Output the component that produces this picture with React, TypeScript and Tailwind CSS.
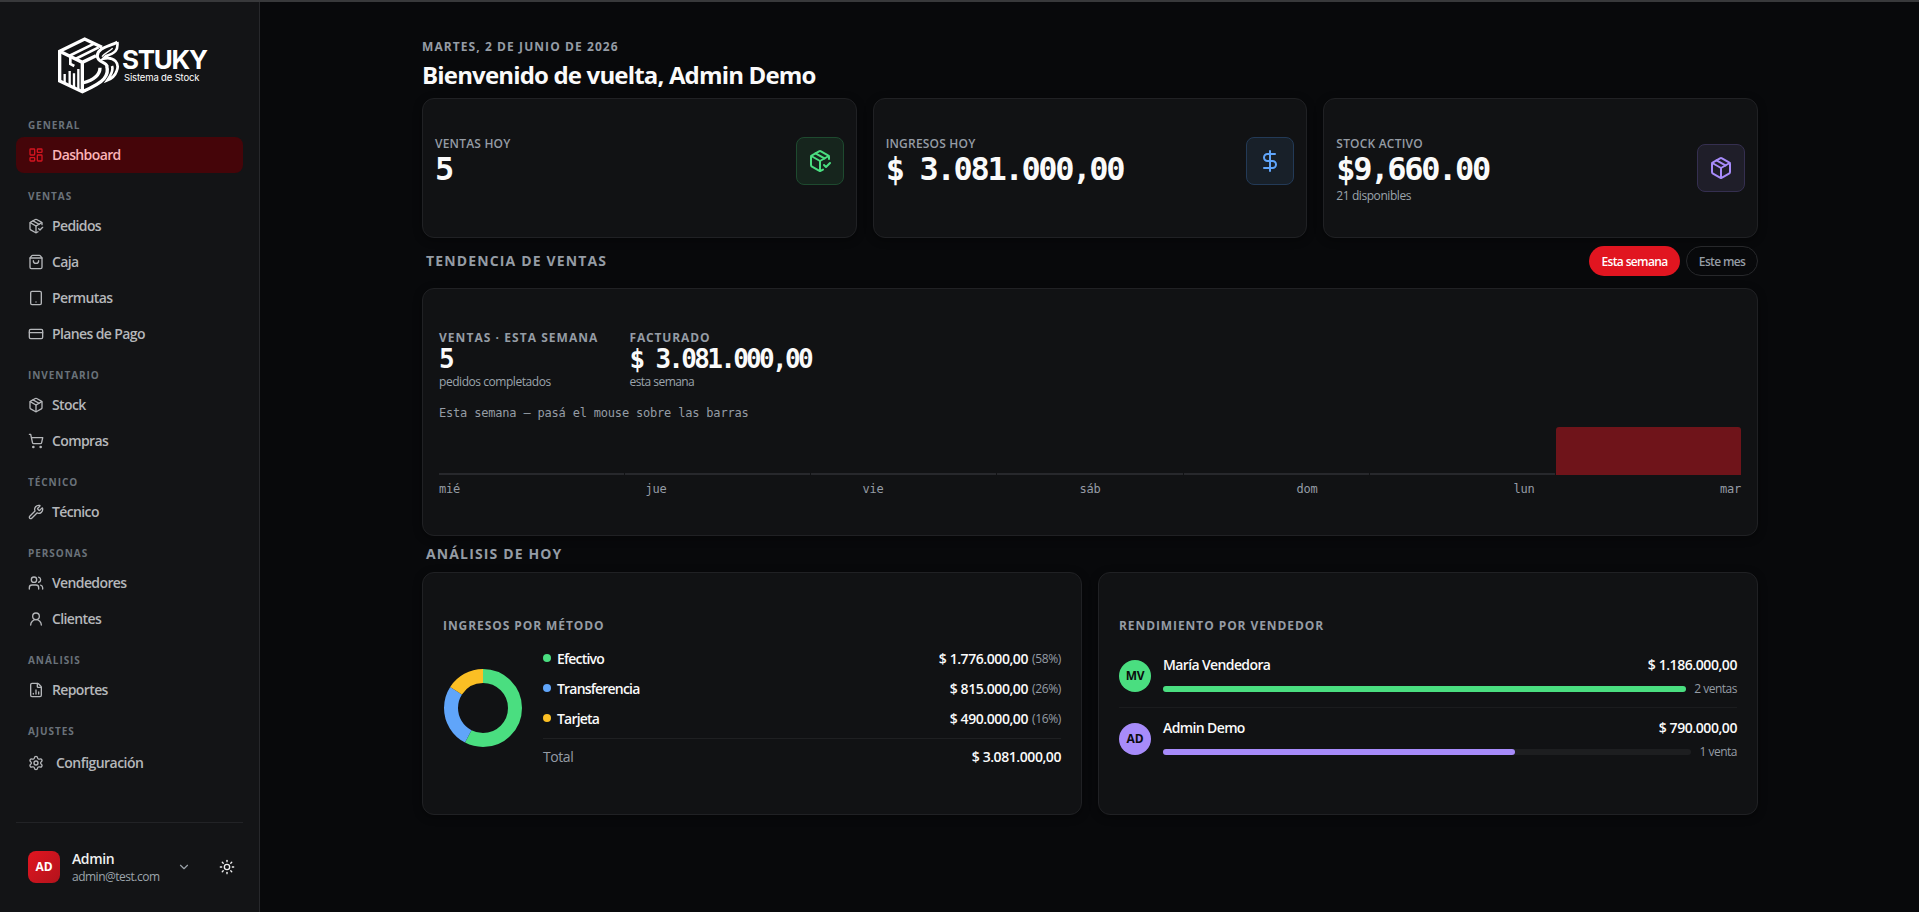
import {
  ChevronDown,
  CreditCard,
  DollarSign,
  FileChartColumn,
  LayoutDashboard,
  Package,
  PackageCheck,
  Settings,
  ShoppingBag,
  ShoppingCart,
  Sun,
  Tablet,
  UserRound,
  Users,
  Wrench,
} from "lucide-react";
import type { LucideIcon } from "lucide-react";

type NavItem = { label: string; icon: LucideIcon; active?: boolean };

const sections: { title: string; items: NavItem[] }[] = [
  { title: "GENERAL", items: [{ label: "Dashboard", icon: LayoutDashboard, active: true }] },
  {
    title: "VENTAS",
    items: [
      { label: "Pedidos", icon: PackageCheck },
      { label: "Caja", icon: ShoppingBag },
      { label: "Permutas", icon: Tablet },
      { label: "Planes de Pago", icon: CreditCard },
    ],
  },
  {
    title: "INVENTARIO",
    items: [
      { label: "Stock", icon: Package },
      { label: "Compras", icon: ShoppingCart },
    ],
  },
  { title: "TÉCNICO", items: [{ label: "Técnico", icon: Wrench }] },
  {
    title: "PERSONAS",
    items: [
      { label: "Vendedores", icon: Users },
      { label: "Clientes", icon: UserRound },
    ],
  },
  { title: "ANÁLISIS", items: [{ label: "Reportes", icon: FileChartColumn }] },
];

const stats = [
  {
    label: "VENTAS HOY",
    value: "5",
    sub: "",
    icon: PackageCheck,
    box: "bg-[#16251d] border-[#1e4a2f] text-[#4ade80]",
  },
  {
    label: "INGRESOS HOY",
    value: "$ 3.081.000,00",
    sub: "",
    icon: DollarSign,
    box: "bg-[#182029] border-[#233a57] text-[#60a5fa]",
  },
  {
    label: "STOCK ACTIVO",
    value: "$9,660.00",
    sub: "21 disponibles",
    icon: Package,
    box: "bg-[#1f1e29] border-[#352f50] text-[#a78bfa]",
  },
];

const days = [
  { label: "mié", value: 0 },
  { label: "jue", value: 0 },
  { label: "vie", value: 0 },
  { label: "sáb", value: 0 },
  { label: "dom", value: 0 },
  { label: "lun", value: 0 },
  { label: "mar", value: 5 },
];

const methods = [
  { label: "Efectivo", amount: "$ 1.776.000,00", pct: 58, share: 57.64, dot: "bg-[#4ade80]", color: "#4ade80" },
  { label: "Transferencia", amount: "$ 815.000,00", pct: 26, share: 26.45, dot: "bg-[#60a5fa]", color: "#60a5fa" },
  { label: "Tarjeta", amount: "$ 490.000,00", pct: 16, share: 15.91, dot: "bg-[#fbbf24]", color: "#fbbf24" },
];

const sellers = [
  { name: "María Vendedora", initials: "MV", amount: "$ 1.186.000,00", count: "2 ventas", pct: 100, color: "bg-[#4ade80]" },
  { name: "Admin Demo", initials: "AD", amount: "$ 790.000,00", count: "1 venta", pct: 66.6, color: "bg-[#a78bfa]" },
];

const Logo = () => (
  <div className="flex h-[57px] w-[150px] ml-[42px]">
    <svg width="61" height="57" viewBox="174 111 183 171" fill="none" stroke="#fff" strokeWidth="10" className="shrink-0">
      <path d="M306 142 L254 117 L179 154 V243 L247 275 C285 258 304 246 312 236 C322 224 324 210 320 198" />
      <path d="M179 154 L247 187 L288 167 M247 187 V275" />
      <path d="M207 168 L284 130 M226 177 L296 142" strokeWidth="8" />
      <path d="M211 170 V192 L223 198" strokeWidth="8" />
      <path d="M194 248 V222 M209 256 V213 M222 262 V220 M235 268 V207" strokeWidth="7" />
      <path d="M248 249 C280 240 300 225 300 203" strokeWidth="10" />
      <path d="M352 126 C332 139 292 142 292 168 C292 188 318 184 322 200" strokeWidth="9" />
      <path d="M352 126 C355 150 346 160 318 168 L310 176 C345 168 359 192 350 213 C345 228 335 236 322 241 C334 224 340 208 336 198" strokeWidth="8" />
      <path d="M306 170 C312 160 326 156 338 145" strokeWidth="4" />
    </svg>
    <div className="ml-[3px] pt-[12px] font-['Inter'] text-white">
      <div className="text-[26px] font-bold leading-[22px] tracking-[-1.3px]">STUKY</div>
      <div className="pl-[2px] pt-[1px] text-[9.5px] leading-3 tracking-[-0.15px] whitespace-nowrap">Sistema de Stock</div>
    </div>
  </div>
);

const NavLink = ({ item }: { item: NavItem }) => {
  const Icon = item.icon;
  return (
    <div
      className={`flex h-9 items-center gap-2 rounded-lg px-3 text-[14px] font-semibold tracking-[-0.62px] ${
        item.active ? "bg-[#450509] text-[#fbb4b8]" : "text-[#b5b7ba]"
      }`}
    >
      <Icon size={16} className={item.active ? "text-[#d3141f]" : ""} />
      <span className="pb-px">{item.label}</span>
    </div>
  );
};

const SectionTitle = ({ children }: { children: string }) => (
  <div className="h-[35px] px-3 pt-4 text-[10px] font-bold leading-[15px] tracking-[0.95px] text-[#6a727a]">{children}</div>
);

const Sidebar = () => (
  <aside className="flex w-[260px] shrink-0 flex-col border-r border-[#27282b] bg-[#131416] px-4 pt-[35px]">
    <Logo />
    <nav className="pt-2">
      {sections.map((s) => (
        <div key={s.title}>
          <SectionTitle>{s.title}</SectionTitle>
          {s.items.map((item) => (
            <NavLink key={item.label} item={item} />
          ))}
        </div>
      ))}
      <SectionTitle>AJUSTES</SectionTitle>
      <div className="flex h-10 items-center gap-3 px-3 text-[14px] font-semibold tracking-[-0.55px] text-[#b5b7ba]">
        <Settings size={16} />
        <span className="pb-px">Configuración</span>
      </div>
    </nav>
    <div className="mt-auto flex h-[90px] items-center border-t border-[#222326] pb-0.5 pl-3">
      <div className="flex size-8 shrink-0 items-center justify-center rounded-lg bg-gradient-to-br from-[#e11520] to-[#b3131c] text-[12px] font-bold tracking-[-0.2px] text-white">
        AD
      </div>
      <div className="ml-3 w-[102px] shrink-0 pt-0.5">
        <div className="text-[14px] font-semibold leading-[18px] tracking-[-0.4px] text-[#f0f0f0]">Admin</div>
        <div className="text-[12px] leading-[18px] tracking-[-0.5px] text-[#9ca4ac]">admin@test.com</div>
      </div>
      <ChevronDown size={14} className="ml-[3px] shrink-0 text-[#9aa1a8]" />
      <Sun size={16} className="ml-7 shrink-0 text-[#f0f0f0]" />
    </div>
  </aside>
);

const card = "rounded-xl border border-[#202124] bg-[#111214] shadow-[0_2px_8px_rgba(0,0,0,0.4)]";

const StatCards = () => (
  <div className="grid grid-cols-3 gap-4">
    {stats.map(({ label, value, sub, icon: Icon, box }) => (
      <div key={label} className={`${card} h-[140px] px-3 pt-[37px]`}>
        <div className="flex items-center justify-between">
          <div>
            <div className="text-[12px] font-semibold leading-[16px] tracking-[0.2px] text-[#959ca5]">{label}</div>
            <div className="font-['DejaVu_Sans_Mono'] text-[32px] font-bold leading-[34px] tracking-[-2.3px] text-[#fafafa] whitespace-pre">
              {value}
            </div>
            {sub && <div className="h-[14px] pt-px text-[12px] leading-[17px] tracking-[-0.43px] text-[#9ca4ac]">{sub}</div>}
          </div>
          <div className={`flex size-12 items-center justify-center rounded-lg border ${box}`}>
            <Icon size={24} />
          </div>
        </div>
      </div>
    ))}
  </div>
);

const TrendCard = () => (
  <div className={`${card} h-[248px] px-4 pt-[41px]`}>
    <div className="flex">
      <div className="w-[190.5px]">
        <div className="text-[12px] font-bold leading-4 tracking-[1.05px] text-[#959ca5]">VENTAS · ESTA SEMANA</div>
        <div className="font-['DejaVu_Sans_Mono'] text-[26px] font-bold leading-[26px] tracking-[-2.7px] text-[#fafafa]">5</div>
        <div className="pt-px text-[12px] leading-[18px] tracking-[-0.45px] text-[#9ca4ac]">pedidos completados</div>
      </div>
      <div>
        <div className="text-[12px] font-bold leading-4 tracking-[0.85px] text-[#959ca5]">FACTURADO</div>
        <div className="font-['DejaVu_Sans_Mono'] text-[26px] font-bold leading-[26px] tracking-[-2.7px] text-[#fafafa]">
          $ 3.081.000,00
        </div>
        <div className="pt-px text-[12px] leading-[18px] tracking-[-0.55px] text-[#9ca4ac]">esta semana</div>
      </div>
    </div>
    <div className="mt-[13px] font-['DejaVu_Sans_Mono'] text-[12px] leading-[18px] tracking-[-0.19px] text-[#959ca5]">
      Esta semana — pasá el mouse sobre las barras
    </div>
    <div className="mt-[5px] flex h-12 items-end gap-px">
      {days.map((d) => (
        <div
          key={d.label}
          className={d.value ? "h-full flex-1 rounded-t-[3px] bg-[#6f141a]" : "h-0.5 flex-1 bg-[#27282c]"}
        />
      ))}
    </div>
    <div className="mt-[5px] flex justify-between font-['DejaVu_Sans_Mono'] text-[12px] leading-[18px] tracking-[-0.19px] text-[#959ca5]">
      {days.map((d, i) => (
        <span
          key={d.label}
          className={`flex w-0 ${i === 0 ? "justify-start" : i === days.length - 1 ? "justify-end" : "justify-center"}`}
        >
          {d.label}
        </span>
      ))}
    </div>
  </div>
);

const Donut = () => {
  let offset = 0;
  return (
    <svg width="80" height="80" viewBox="0 0 80 80" className="mb-0.5 shrink-0 -rotate-90">
      {methods.map((m) => {
        const start = offset;
        offset += m.share;
        return (
          <circle
            key={m.label}
            cx="40"
            cy="40"
            r="32"
            fill="none"
            stroke={m.color}
            strokeWidth="14"
            pathLength="100"
            strokeDasharray={`${m.share} ${100 - m.share}`}
            strokeDashoffset={-start}
          />
        );
      })}
    </svg>
  );
};

const MethodsCard = () => (
  <div className={`${card} h-[243px] px-5 pt-[44px]`}>
    <div className="text-[12px] font-bold leading-[18px] tracking-[0.92px] text-[#959ca5]">INGRESOS POR MÉTODO</div>
    <div className="mt-2 flex items-center">
      <Donut />
      <div className="ml-5 flex-1 text-[14px] tracking-[-0.43px]">
        {methods.map((m) => (
          <div key={m.label} className="flex h-[30px] items-center font-semibold text-[#fafafa]">
            <span className={`size-2 rounded-full ${m.dot}`} />
            <span className="ml-1.5 flex-1 tracking-[-0.8px]">{m.label}</span>
            <span>{m.amount}</span>
            <span className="ml-1 pt-px text-[12px] font-normal tracking-[-0.35px] text-[#959ca5]">({m.pct}%)</span>
          </div>
        ))}
        <div className="mt-[5px] flex h-[37px] items-center justify-between border-t border-[#1f2022] pb-px">
          <span className="text-[#959ca5]">Total</span>
          <span className="font-semibold text-[#fafafa]">$ 3.081.000,00</span>
        </div>
      </div>
    </div>
  </div>
);

const SellersCard = () => (
  <div className={`${card} h-[243px] px-5 pt-[44px]`}>
    <div className="text-[12px] font-bold leading-[18px] tracking-[0.92px] text-[#959ca5]">RENDIMIENTO POR VENDEDOR</div>
    <div className="mt-[9px]">
      {sellers.map((s, i) => (
        <div key={s.name} className={`flex h-[63px] items-center gap-3 ${i ? "border-t border-[#1b1c1e]" : ""}`}>
          <div
            className={`flex size-8 shrink-0 items-center justify-center rounded-full text-[12px] font-bold tracking-[-0.2px] text-[#0b0b0d] ${s.color}`}
          >
            {s.initials}
          </div>
          <div className="flex-1">
            <div className="flex justify-between pt-px text-[14px] font-semibold leading-[20px] tracking-[-0.43px] text-[#fafafa]">
              <span className="tracking-[-0.62px]">{s.name}</span>
              <span>{s.amount}</span>
            </div>
            <div className="mt-[5px] flex items-center gap-2">
              <div className="h-1.5 flex-1 rounded-full bg-[#1d1e20]">
                <div className={`h-full rounded-full ${s.color}`} style={{ width: `${s.pct}%` }} />
              </div>
              <span className="text-[12px] leading-[18px] tracking-[-0.5px] text-[#959ca5]">{s.count}</span>
            </div>
          </div>
        </div>
      ))}
    </div>
  </div>
);

const App = () => {
  return (
    <div className="flex h-[912px] w-full overflow-hidden border-t-2 border-[#38393b] bg-[#08090b] font-['Open_Sans',sans-serif]">
      <Sidebar />
      <main className="flex-1 pt-[35px] pl-px">
        <div className="mx-auto w-[1336px]">
          <div className="pt-px text-[12px] font-bold leading-[18px] tracking-[1.08px] text-[#959ca5]">
            MARTES, 2 DE JUNIO DE 2026
          </div>
          <h1 className="h-[42px] pt-[3px] text-[24px] font-bold leading-[32px] tracking-[-0.83px] text-[#fafafa]">
            Bienvenido de vuelta, Admin Demo
          </h1>
          <StatCards />
          <div className="mt-2 flex h-[30px] items-center justify-between pl-1">
            <h2 className="pb-0.5 text-[14px] font-bold tracking-[1.14px] text-[#959ca5]">TENDENCIA DE VENTAS</h2>
            <div className="flex gap-1.5 text-[12px] font-semibold tracking-[-0.65px]">
              <button className="h-[30px] w-[91px] rounded-full bg-[#e11520] pt-0.5 text-white">Esta semana</button>
              <button className="h-[30px] w-[72px] rounded-full border border-[#27282b] pt-0.5 text-[#959ca5]">Este mes</button>
            </div>
          </div>
          <div className="mt-3">
            <TrendCard />
          </div>
          <h2 className="flex h-9 items-center pb-0.5 pl-1 text-[14px] font-bold tracking-[1.14px] text-[#959ca5]">
            ANÁLISIS DE HOY
          </h2>
          <div className="grid grid-cols-2 gap-4">
            <MethodsCard />
            <SellersCard />
          </div>
        </div>
      </main>
    </div>
  );
};

export default App;
